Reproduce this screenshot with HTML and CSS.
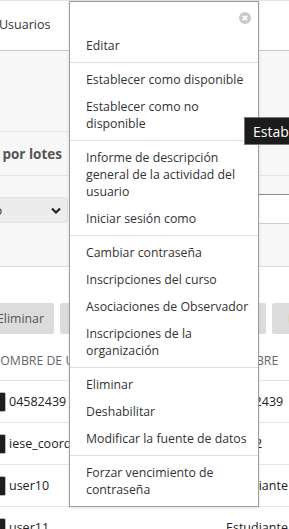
FILE: index.html
```
<!DOCTYPE html>
<html lang="es">
<head>
    <meta charset="UTF-8">
    <meta name="viewport" content="width=device-width, initial-scale=1.0">
    <title>Usuarios</title>
    <link rel="stylesheet" href="styles.css">
</head>
<body>
    <div class="page">
        <header class="topbar">
            <h1 class="page-title">Usuarios</h1>
        </header>

        <section class="batch">
            <div class="batch-top"></div>
            <div class="batch-head">
                <h2 class="batch-title">Acciones por lotes</h2>
            </div>
            <div class="batch-filters">
                <div class="select">
                    <span class="select-text">Todo</span>
                    <svg class="chevron" width="10" height="7" viewBox="0 0 10 7"><path d="M1 1.5 L5 5.5 L9 1.5" fill="none" stroke="#222" stroke-width="2.2"/></svg>
                </div>
                <div class="search-input"></div>
            </div>
        </section>

        <div class="actions">
            <button class="btn btn-first">Eliminar</button>
            <button class="btn btn-hidden">Deshabilitar</button>
            <button class="btn">Inscribir</button>
        </div>

        <div class="table">
            <div class="thead">
                <span class="col-user">Nombre de usuario</span>
                <span class="col-name">Nombre</span>
            </div>
            <div class="row">
                <span class="cb"></span>
                <span class="col-user">04582439</span>
                <span class="col-name">04582439</span>
            </div>
            <div class="row">
                <span class="cb"></span>
                <span class="col-user">iese_coordinador</span>
                <span class="col-name">Iese_2</span>
            </div>
            <div class="row">
                <span class="cb"></span>
                <span class="col-user">user10</span>
                <span class="col-name">Estudiante</span>
            </div>
            <div class="row">
                <span class="cb"></span>
                <span class="col-user">user11</span>
                <span class="col-name">Estudiante</span>
            </div>
        </div>
    </div>

    <!-- menú contextual abierto sobre la fila -->
    <div class="context-menu">
        <div class="menu-head">
            <svg class="menu-close" width="12" height="12" viewBox="0 0 12 12">
                <circle cx="6" cy="6" r="6" fill="#c9c9c9"/>
                <path d="M3.8 3.8 L8.2 8.2 M8.2 3.8 L3.8 8.2" stroke="#fff" stroke-width="1.8"/>
            </svg>
        </div>
        <ul class="menu-group">
            <li>Editar</li>
        </ul>
        <ul class="menu-group">
            <li>Establecer como disponible</li>
            <li>Establecer como no disponible</li>
        </ul>
        <ul class="menu-group">
            <li>Informe de descripción general de la actividad del usuario</li>
            <li>Iniciar sesión como</li>
        </ul>
        <ul class="menu-group">
            <li>Cambiar contraseña</li>
            <li>Inscripciones del curso</li>
            <li>Asociaciones de Observador</li>
            <li>Inscripciones de la organización</li>
        </ul>
        <ul class="menu-group">
            <li>Eliminar</li>
            <li>Deshabilitar</li>
            <li>Modificar la fuente de datos</li>
        </ul>
        <ul class="menu-group">
            <li>Forzar vencimiento de contraseña</li>
        </ul>
    </div>

    <div class="tooltip">Establecer como no disponible</div>
</body>
</html>
```

FILE: styles.css
```
body {
    margin: 0;
    width: 289px;
    height: 529px;
    overflow: hidden;
    font-family: "Open Sans", "Noto Sans", sans-serif;
    font-size: 12.3px;
    color: #333;
    background: #fff;
}
.page {
    width: 289px;
    overflow: hidden;
}
.topbar {
    box-sizing: border-box;
    height: 51px;
    padding-bottom: 3px;
    border-top: 1px solid #e2e2e2;
    border-bottom: 1px solid #c9c9c9;
    display: flex;
    align-items: center;
}
.page-title {
    margin: 0 0 0 -1px;
    font-size: 12.5px;
    font-weight: normal;
    color: #333;
}
.batch {
    background: #f7f7f7;
}
.batch-top {
    height: 80px;
    border-bottom: 1px solid #e4e4e4;
}
.batch-head {
    box-sizing: border-box;
    height: 44px;
    border-bottom: 1px solid #e4e4e4;
    display: flex;
    align-items: center;
}
.batch-title {
    margin: 0;
    width: 62px;
    display: flex;
    justify-content: flex-end;
    white-space: nowrap;
    font-size: 13.5px;
    font-weight: bold;
    color: #555;
}
.batch-filters {
    box-sizing: border-box;
    height: 91px;
    padding-top: 18px;
    border-bottom: 1px solid #dcdcdc;
    display: flex;
    align-items: flex-start;
}
.select {
    box-sizing: border-box;
    margin: 3px 0 0 -40px;
    width: 108px;
    height: 26px;
    padding: 0 5px 0 12px;
    background: #ececec;
    border: 1px solid #e2e2e2;
    border-radius: 3px;
    display: flex;
    align-items: center;
    justify-content: space-between;
    color: #333;
}
.chevron {
    margin-right: 1px;
}
.search-input {
    box-sizing: border-box;
    flex: 1;
    margin: 0 -10px 0 12px;
    height: 30px;
    background: #fff;
    border-top: 1px solid #8a8a8a;
    border-bottom: 1px solid #cfcfcf;
}
.actions {
    display: flex;
    gap: 6px;
    padding-top: 36px;
    margin-left: -19px;
    white-space: nowrap;
}
.btn {
    flex: none;
    height: 31px;
    padding: 0 16px;
    border: 0;
    border-radius: 2px;
    background: #dcdcdc;
    font-family: inherit;
    font-size: 12.3px;
    color: #555;
}
.btn-first {
    width: 73px;
}
.btn-hidden {
    width: 206px;
}
.table {
    margin-left: -9px;
}
.thead {
    box-sizing: border-box;
    height: 47px;
    padding-top: 6px;
    border-bottom: 1px solid #e6e6e6;
    display: flex;
    align-items: center;
    text-transform: uppercase;
    color: #666;
    white-space: nowrap;
}
.thead .col-user {
    flex: none;
    width: 235px;
    overflow: hidden;
}
.row {
    box-sizing: border-box;
    height: 42px;
    border-bottom: 1px solid #e6e6e6;
    display: flex;
    align-items: center;
    white-space: nowrap;
    font-size: 12.5px;
    color: #222;
}
.cb {
    box-sizing: border-box;
    flex: none;
    width: 15px;
    height: 20px;
    background: #1e1e1e;
    border: 1px solid #b5b5b5;
    border-radius: 2px;
}
.row .col-user {
    flex: none;
    width: 217px;
    margin-left: 3px;
    overflow: hidden;
}
.col-name {
    white-space: nowrap;
}
.context-menu {
    position: absolute;
    left: 69px;
    top: 1px;
    box-sizing: border-box;
    width: 190px;
    background: #fff;
    border: 1px solid #9d9d9d;
    box-shadow: 0 1px 3px rgba(0, 0, 0, 0.12);
}
.menu-head {
    box-sizing: border-box;
    height: 27px;
    padding: 10px 7px 0 0;
    display: flex;
    justify-content: flex-end;
    align-items: flex-start;
}
.menu-group {
    list-style: none;
    margin: 0;
    padding: 3px 0;
    border-top: 1px solid #dedede;
}
.menu-head + .menu-group {
    border-top: 0;
}
.menu-group li {
    padding: 5px 8px 5px 16px;
    line-height: 17px;
    font-size: 12.3px;
    color: #333;
}
.tooltip {
    position: absolute;
    left: 244px;
    top: 117px;
    box-sizing: border-box;
    height: 28px;
    padding: 0 8px;
    display: flex;
    align-items: center;
    white-space: nowrap;
    background: #1c1c1c;
    border: 1px solid #777;
    color: #fff;
    font-size: 14px;
}
```
